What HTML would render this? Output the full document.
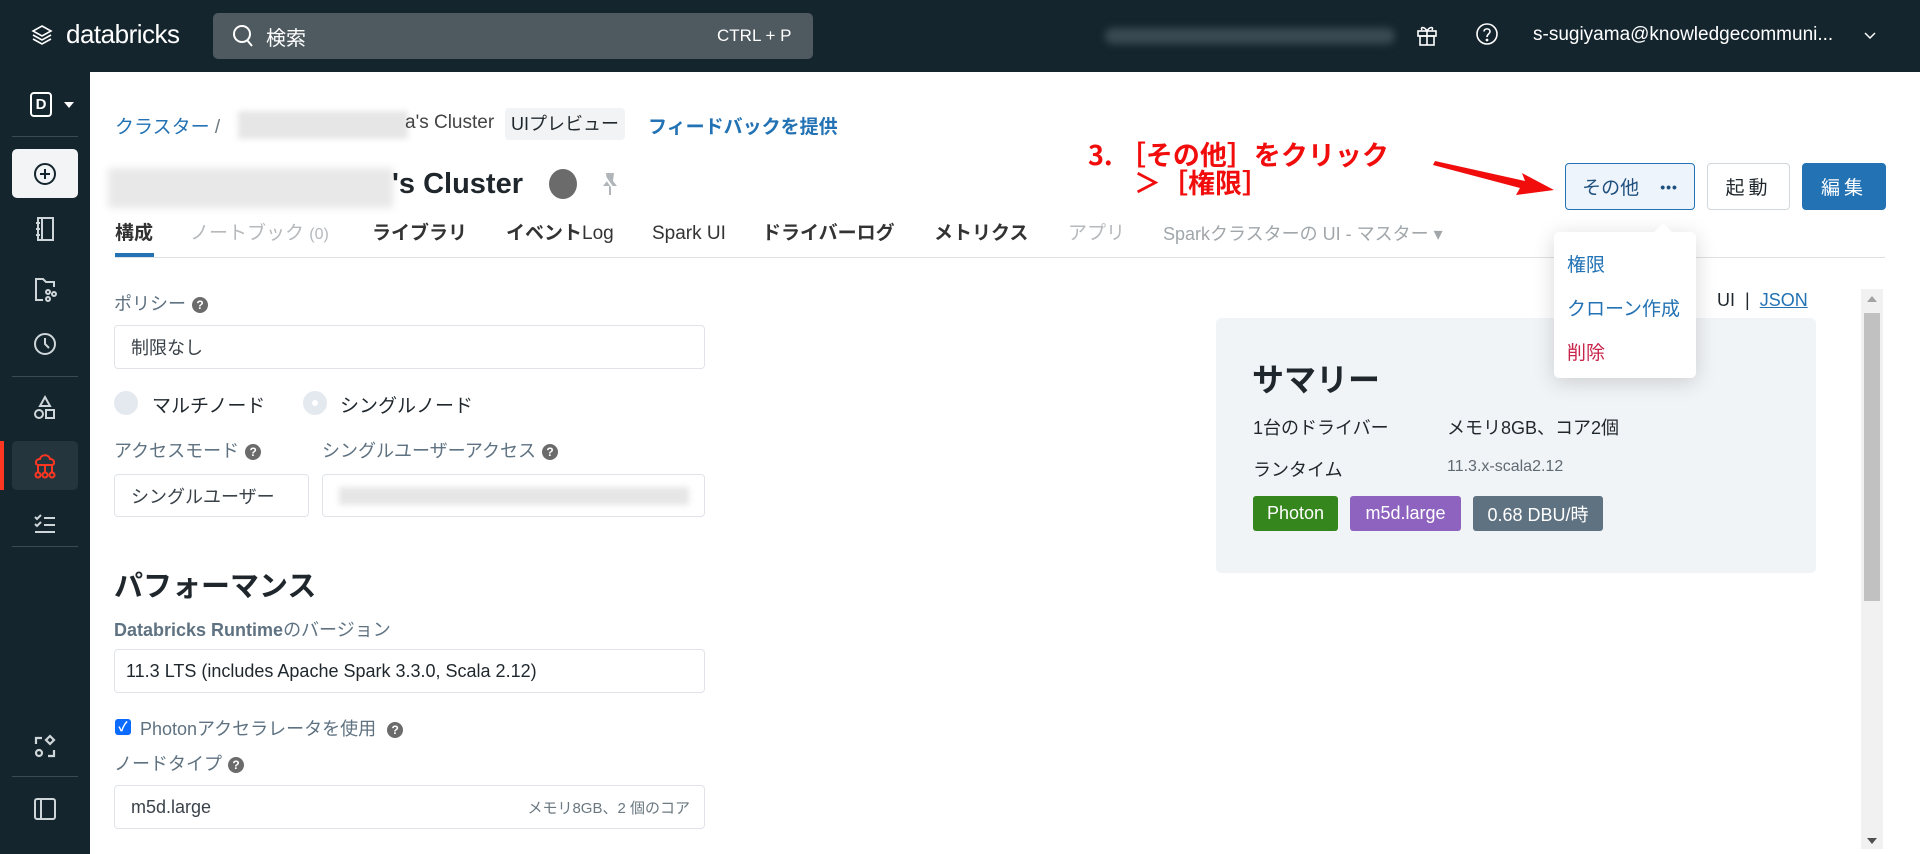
<!DOCTYPE html>
<html><head><meta charset="utf-8"><style>
*{box-sizing:border-box;margin:0;padding:0}
body{width:1920px;height:854px;overflow:hidden;background:#fff;font-family:"Liberation Sans","Noto Sans CJK JP",sans-serif;color:#1f272d;position:relative;font-size:17px}
.abs{position:absolute}
.hdr{left:0;top:0;width:1920px;height:72px;background:#14252d}
.side{left:0;top:72px;width:90px;height:782px;background:#14252d}
.sep{position:absolute;left:12px;width:66px;height:1px;background:#3b4b53}
.ico{position:absolute;left:30px;width:30px;height:30px}
.inp{position:absolute;border:1px solid #e0e4e8;border-radius:4px;background:#fff;padding-left:16px;display:flex;align-items:center;font-size:18px;color:#3a4249}
.lbl{position:absolute;color:#5f7281;font-size:18px;white-space:nowrap}
.q{display:inline-block;width:16px;height:16px;border-radius:50%;background:#6b6b6b;color:#fff;font-size:12px;font-weight:bold;text-align:center;line-height:16px;vertical-align:1px;margin-left:6px}
.tab{position:absolute;top:222px;font-size:19px;font-weight:bold;color:#333;white-space:nowrap;line-height:24px}
.btn{position:absolute;top:163px;height:47px;border-radius:4px;display:flex;align-items:center;justify-content:center;font-size:19px;letter-spacing:4px}
.badge{position:absolute;top:496px;height:35px;border-radius:3px;color:#fff;font-size:18px;display:flex;align-items:center;justify-content:center}
.red{position:absolute;color:#f20d0d;font-weight:bold;font-size:27px;white-space:nowrap;font-family:"Noto Sans CJK JP",sans-serif}
</style></head><body>
<div class="abs hdr"></div>
<svg class="abs" style="left:30px;top:24px" width="24" height="24" viewBox="0 0 24 24" fill="none" stroke="#fff" stroke-width="1.6"><path d="M12 2L21 7L12 12L3 7Z"/><path d="M3 11L12 16L21 11"/><path d="M3 15L12 20L21 15"/></svg>
<div class="abs" style="left:66px;top:19px;color:#fff;font-size:26px;letter-spacing:-0.5px">databricks</div>
<div class="abs" style="left:213px;top:13px;width:600px;height:46px;background:#4e5a60;border-radius:5px"></div>
<svg class="abs" style="left:231px;top:23px" width="24" height="26" viewBox="0 0 24 26" fill="none" stroke="#fff" stroke-width="2"><circle cx="11" cy="11" r="8"/><path d="M16 17L21 23"/></svg>
<div class="abs" style="left:266px;top:22px;color:#fff;font-size:20px">検索</div>
<div class="abs" style="left:717px;top:26px;color:#fff;font-size:17px">CTRL + P</div>
<div class="abs" style="left:1105px;top:28px;width:290px;height:16px;background:#3a4a52;filter:blur(4px);border-radius:8px"></div>
<svg class="abs" style="left:1416px;top:23px" width="22" height="24" viewBox="0 0 22 24" fill="none" stroke="#fff" stroke-width="1.6"><rect x="2" y="8" width="18" height="5"/><rect x="4" y="13" width="14" height="9"/><path d="M11 8V22M11 8C8 3 4 4 6 7M11 8C14 3 18 4 16 7"/></svg>
<svg class="abs" style="left:1475px;top:22px" width="24" height="24" viewBox="0 0 24 24" fill="none" stroke="#fff" stroke-width="1.6"><circle cx="12" cy="12" r="10"/><path d="M9 9.5C9 6 15 6 15 9.5C15 12 12 12 12 15"/><circle cx="12" cy="18" r=".6" fill="#fff"/></svg>
<div class="abs" style="left:1533px;top:24px;color:#fff;font-size:19px">s-sugiyama@knowledgecommuni...</div>
<svg class="abs" style="left:1864px;top:32px" width="12" height="8" viewBox="0 0 12 8" fill="none" stroke="#fff" stroke-width="1.5"><path d="M1 1L6 6L11 1"/></svg>

<div class="abs side">
 <div class="abs" style="left:30px;top:20px;width:22px;height:25px;border:2px solid #fff;border-radius:4px;color:#fff;font-weight:bold;font-size:15px;text-align:center;line-height:21px">D</div>
 <div class="abs" style="left:64px;top:30px;border-left:5px solid transparent;border-right:5px solid transparent;border-top:6px solid #fff"></div>
 <div class="sep" style="top:64px"></div>
 <div class="abs" style="left:12px;top:77px;width:66px;height:49px;background:#f2f4f6;border-radius:5px"></div>
 <svg class="ico" style="top:87px" viewBox="0 0 30 30" fill="none" stroke="#14252d" stroke-width="2"><circle cx="15" cy="15" r="10"/><path d="M15 10V20M10 15H20"/></svg>
 <svg class="ico" style="top:142px" viewBox="0 0 30 30" fill="none" stroke="#cfd6da" stroke-width="2"><rect x="8" y="4" width="15" height="22"/><path d="M12 4V26M6 9H10M6 15H10M6 21H10"/></svg>
 <svg class="ico" style="top:202px" viewBox="0 0 30 30" fill="none" stroke="#cfd6da" stroke-width="2"><path d="M13 26H6V5H13L16 8H24V13"/><circle cx="18" cy="18" r="2"/><circle cx="24" cy="20" r="2"/><circle cx="18" cy="25" r="2"/></svg>
 <svg class="ico" style="top:257px" viewBox="0 0 30 30" fill="none" stroke="#cfd6da" stroke-width="2"><circle cx="15" cy="15" r="10"/><path d="M15 9V15L19 19"/></svg>
 <div class="sep" style="top:304px"></div>
 <svg class="ico" style="top:321px" viewBox="0 0 30 30" fill="none" stroke="#cfd6da" stroke-width="2"><path d="M15 4L20 13H10Z"/><circle cx="9" cy="21" r="4"/><rect x="16" y="17" width="8" height="8"/></svg>
 <div class="abs" style="left:0;top:369px;width:4px;height:49px;background:#ff3621"></div>
 <div class="abs" style="left:12px;top:369px;width:66px;height:49px;background:#24353e;border-radius:5px"></div>
 <svg class="ico" style="top:379px" viewBox="0 0 30 30" fill="none" stroke="#ff3621" stroke-width="2"><path d="M8 14C5 14 5 8 10 8C11 3 19 3 20 8C25 8 25 14 22 14Z"/><path d="M15 14V21M8 14V21M22 14V21"/><circle cx="8" cy="24" r="2.5"/><circle cx="15" cy="24" r="2.5"/><circle cx="22" cy="24" r="2.5"/></svg>
 <svg class="ico" style="top:438px" viewBox="0 0 30 30" fill="none" stroke="#cfd6da" stroke-width="2"><path d="M5 7L7 9L11 5M5 14L7 16L11 12M14 8H25M14 15H25M5 22H25"/></svg>
 <div class="sep" style="top:474px"></div>
 <svg class="ico" style="top:660px" viewBox="0 0 30 30" fill="none" stroke="#cfd6da" stroke-width="2.2"><path d="M12 6H6V12M24 18V24H18"/><path d="M20 4L24 8L20 12L16 8Z"/><circle cx="9" cy="21" r="3"/></svg>
 <div class="sep" style="top:704px"></div>
 <svg class="ico" style="top:722px" viewBox="0 0 30 30" fill="none" stroke="#cfd6da" stroke-width="2"><rect x="5" y="5" width="20" height="20" rx="2"/><path d="M11 5V25"/></svg>
</div>

<!-- breadcrumb -->
<div class="abs" style="left:115px;top:112px;font-size:19px;color:#2272b4">クラスター <span style="color:#6b7880">/</span></div>
<div class="abs" style="left:238px;top:111px;width:170px;height:28px;background:#e6e6e6;filter:blur(3px)"></div>
<div class="abs" style="left:405px;top:112px;font-size:19px;color:#444">a's Cluster</div>
<div class="abs" style="left:505px;top:108px;width:120px;height:32px;background:#f1f3f5;border-radius:4px;font-size:18px;text-align:center;line-height:32px;color:#1f272d">UIプレビュー</div>
<div class="abs" style="left:648px;top:112px;font-size:19px;color:#2272b4;font-weight:bold">フィードバックを提供</div>
<!-- title -->
<div class="abs" style="left:108px;top:168px;width:285px;height:40px;background:#e8e8e8;filter:blur(4px)"></div>
<div class="abs" style="left:392px;top:168px;font-size:29px;font-weight:bold;color:#1f272d">'s Cluster</div>
<div class="abs" style="left:549px;top:169px;width:28px;height:30px;border-radius:50%;background:#6b6b6b"></div>
<svg class="abs" style="left:600px;top:171px" width="20" height="26" viewBox="0 0 20 26" fill="#b0b5b9"><path d="M6 2H14L13 10L17 15H3L7 10Z"/><rect x="9" y="15" width="2" height="9"/><path d="M3 3L17 23" stroke="#fff" stroke-width="2"/></svg>
<!-- tabs -->
<div class="tab" style="left:115px">構成</div>
<div class="abs" style="left:115px;top:253px;width:39px;height:4px;background:#2272b4"></div>
<div class="tab" style="left:190px;color:#b5b9bc;font-weight:normal">ノートブック <span style="font-size:16px">(0)</span></div>
<div class="tab" style="left:372px">ライブラリ</div>
<div class="tab" style="left:506px">イベント<span style="font-weight:normal">Log</span></div>
<div class="tab" style="left:652px;font-weight:normal">Spark UI</div>
<div class="tab" style="left:762px">ドライバーログ</div>
<div class="tab" style="left:934px">メトリクス</div>
<div class="tab" style="left:1068px;color:#b5b9bc;font-weight:normal">アプリ</div>
<div class="tab" style="left:1163px;color:#a0a6aa;font-weight:normal;font-size:18px">Sparkクラスターの UI - マスター ▾</div>
<div class="abs" style="left:115px;top:257px;width:1770px;height:1px;background:#dde1e4"></div>

<!-- buttons -->
<div class="btn" style="left:1565px;width:130px;border:1px solid #2272b4;background:#eef4fb;color:#1e4f7d;letter-spacing:0">その他&nbsp;&nbsp;&nbsp;&nbsp;<b style="font-size:14px;letter-spacing:1px">•••</b></div>
<div class="btn" style="left:1707px;width:83px;border:1px solid #d1d7db;background:#fff;color:#1f272d">起動</div>
<div class="btn" style="left:1802px;width:84px;background:#2272b4;color:#fff">編集</div>

<!-- annotation -->
<div class="red" style="left:1088px;top:134px">3.&nbsp;［その他］をクリック</div>
<div class="red" style="left:1134px;top:162px">＞［権限］</div>
<svg class="abs" style="left:1430px;top:155px" width="130" height="45" viewBox="0 0 130 45"><path d="M5 6L95 26L92 18L124 35L86 40L90 33L3 10Z" fill="#f20d0d"/></svg>

<!-- UI | JSON -->
<div class="abs" style="left:1717px;top:290px;font-size:18px;color:#1f272d">UI &nbsp;|&nbsp; <span style="color:#2272b4;text-decoration:underline">JSON</span></div>
<!-- scrollbar -->
<div class="abs" style="left:1861px;top:289px;width:22px;height:560px;background:#f1f1f1"></div>
<div class="abs" style="left:1864px;top:313px;width:16px;height:288px;background:#c1c1c1"></div>
<div class="abs" style="left:1867px;top:296px;border-left:5px solid transparent;border-right:5px solid transparent;border-bottom:6px solid #a3a3a3"></div>
<div class="abs" style="left:1867px;top:838px;border-left:5px solid transparent;border-right:5px solid transparent;border-top:6px solid #505050"></div>

<!-- summary -->
<div class="abs" style="left:1216px;top:318px;width:600px;height:255px;background:#f1f4f7;border-radius:5px"></div>
<div class="abs" style="left:1252px;top:355px;font-size:32px;font-weight:bold;color:#1f272d">サマリー</div>
<div class="abs" style="left:1253px;top:414px;font-size:18px">1台のドライバー</div>
<div class="abs" style="left:1447px;top:414px;font-size:18px">メモリ8GB、コア2個</div>
<div class="abs" style="left:1253px;top:456px;font-size:18px">ランタイム</div>
<div class="abs" style="left:1447px;top:458px;font-size:16px;color:#5f6a72">11.3.x-scala2.12</div>
<div class="badge" style="left:1253px;width:85px;background:#35861c">Photon</div>
<div class="badge" style="left:1350px;width:111px;background:#8e63bf">m5d.large</div>
<div class="badge" style="left:1473px;width:130px;background:#5f7281">0.68 DBU/時</div>

<!-- dropdown (on top) -->
<div class="abs" style="left:1554px;top:232px;width:142px;height:146px;background:#fff;border-radius:5px;box-shadow:0 4px 22px rgba(0,0,0,.16);z-index:10"></div>
<div class="abs" style="left:1656px;top:226px;width:14px;height:14px;background:#fff;transform:rotate(45deg);z-index:10"></div>
<div class="abs" style="left:1567px;top:250px;font-size:19px;color:#2272b4;z-index:11">権限</div>
<div class="abs" style="left:1567px;top:294px;font-size:19px;color:#2272b4;z-index:11">クローン作成</div>
<div class="abs" style="left:1567px;top:338px;font-size:19px;color:#c8254a;z-index:11">削除</div>

<!-- form -->
<div class="lbl" style="left:114px;top:290px">ポリシー<span class="q">?</span></div>
<div class="inp" style="left:114px;top:325px;width:591px;height:44px">制限なし</div>
<div class="abs" style="left:114px;top:391px;width:24px;height:24px;border-radius:50%;background:#e3e9ef"></div>
<div class="abs" style="left:152px;top:391px;font-size:19px">マルチノード</div>
<div class="abs" style="left:303px;top:391px;width:24px;height:24px;border-radius:50%;background:#e3e9ef"></div>
<div class="abs" style="left:312px;top:400px;width:6px;height:6px;border-radius:50%;background:#fff"></div>
<div class="abs" style="left:340px;top:391px;font-size:19px">シングルノード</div>
<div class="lbl" style="left:114px;top:437px">アクセスモード<span class="q">?</span></div>
<div class="lbl" style="left:322px;top:437px">シングルユーザーアクセス<span class="q">?</span></div>
<div class="inp" style="left:114px;top:474px;width:195px;height:43px">シングルユーザー</div>
<div class="inp" style="left:322px;top:474px;width:383px;height:43px"><div style="width:350px;height:18px;background:#e6e6e6;filter:blur(3px)"></div></div>
<div class="abs" style="left:114px;top:563px;font-size:29px;font-weight:bold">パフォーマンス</div>
<div class="lbl" style="left:114px;top:616px;font-weight:bold">Databricks Runtime<span style="font-weight:normal">のバージョン</span></div>
<div class="inp" style="left:114px;top:649px;width:591px;height:44px;color:#1f272d;padding-left:11px">11.3 LTS (includes Apache Spark 3.3.0, Scala 2.12)</div>
<div class="abs" style="left:115px;top:719px;width:16px;height:16px;border-radius:3px;background:#0b6bff;color:#fff;font-size:13px;text-align:center;line-height:16px;font-weight:bold">✓</div>
<div class="lbl" style="left:140px;top:715px">Photonアクセラレータを使用 <span class="q">?</span></div>
<div class="lbl" style="left:114px;top:750px">ノードタイプ<span class="q">?</span></div>
<div class="inp" style="left:114px;top:785px;width:591px;height:44px;justify-content:space-between;padding-right:14px"><span>m5d.large</span><span style="font-size:15px;color:#6b7880">メモリ8GB、2 個のコア</span></div>
</body></html>
